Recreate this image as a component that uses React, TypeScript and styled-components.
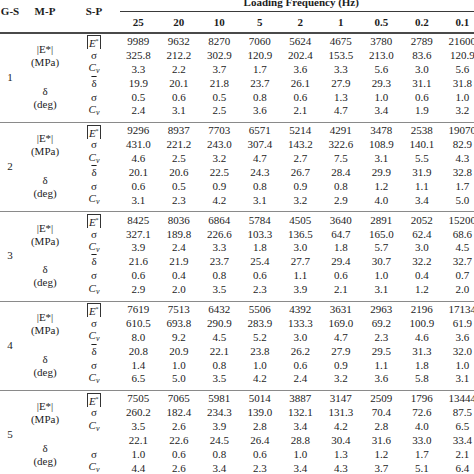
import React from 'react';
import styled, { createGlobalStyle } from 'styled-components';

const GlobalStyle = createGlobalStyle`
  html, body {
    margin: 0;
    padding: 0;
    background: #ffffff;
    overflow: hidden;
  }
`;

const COLUMNS = '20px 50px 48px repeat(9, 40.5px)';
const ROW_H = '13.9px';

const Page = styled.div`
  width: 474px;
  height: 474px;
  overflow: hidden;
  background: #ffffff;
  color: #1c1c1c;
  font-family: 'Liberation Serif', 'Times New Roman', serif;
  font-size: 11px;
`;

const Sheet = styled.div`
  width: 482.5px;
  margin-top: -7px;
`;

const Header = styled.div`
  display: grid;
  grid-template-columns: ${COLUMNS};
  grid-template-rows: 19px 20px;
  border-bottom: 2px solid #4a4a4a;
  font-weight: 700;
`;

const HeadLabel = styled.div`
  grid-row: 1 / 3;
  display: flex;
  align-items: center;
  justify-content: center;
  padding-bottom: 3px;
  white-space: nowrap;
`;

const SpanHead = styled.div`
  grid-column: 4 / 13;
  grid-row: 1;
  display: flex;
  align-items: center;
  justify-content: center;
  border-bottom: 1px solid #3a3a3a;
  margin-left: 2px;
  white-space: nowrap;
`;

const FreqHead = styled.div`
  grid-row: 2;
  display: flex;
  align-items: center;
  justify-content: center;
`;

const Group = styled.div<{ $first: boolean }>`
  display: grid;
  grid-template-columns: ${COLUMNS};
  grid-template-rows: repeat(6, ${ROW_H});
  padding: ${p => (p.$first ? '1px' : '1.5px')} 0 3.5px;
  border-top: ${p => (p.$first ? 'none' : '1.5px solid #8a8a8a')};
`;

const GroupNo = styled.div`
  grid-column: 1;
  grid-row: 1 / 7;
  display: flex;
  align-items: center;
  justify-content: center;
`;

const Property = styled.div<{ $row: string }>`
  grid-column: 2;
  grid-row: ${p => p.$row};
  display: flex;
  flex-direction: column;
  align-items: center;
  justify-content: center;
  line-height: 13px;
`;

const Symbol = styled.div`
  grid-column: 3;
  display: flex;
  align-items: center;
  justify-content: center;
  line-height: ${ROW_H};
`;

const Value = styled.div`
  display: flex;
  align-items: center;
  justify-content: center;
  line-height: ${ROW_H};
  white-space: nowrap;
`;

const ModBox = styled.span`
  display: inline-block;
  border: 1px solid #333;
  border-bottom: none;
  padding: 0 1.5px 0 1px;
  line-height: 11px;
  margin-top: 1px;
  font-style: italic;
`;

const Star = styled.sup`
  font-size: 6px;
  vertical-align: 4px;
  font-style: normal;
`;

const Bar = styled.span`
  text-decoration: overline;
`;

const Italic = styled.i``;

const Sub = styled.sub`
  font-size: 8px;
  font-style: italic;
  vertical-align: -2px;
`;

const freqs = ['25', '20', '10', '5', '2', '1', '0.5', '0.2', '0.1'];

const groups: string[][] = [
  [
    '9989 9632 8270 7060 5624 4675 3780 2789 21600',
    '325.8 212.2 302.9 120.9 202.4 153.5 213.0 83.6 120.9',
    '3.3 2.2 3.7 1.7 3.6 3.3 5.6 3.0 5.6',
    '19.9 20.1 21.8 23.7 26.1 27.9 29.3 31.1 31.8',
    '0.5 0.6 0.5 0.8 0.6 1.3 1.0 0.6 1.0',
    '2.4 3.1 2.5 3.6 2.1 4.7 3.4 1.9 3.2',
  ],
  [
    '9296 8937 7703 6571 5214 4291 3478 2538 19070',
    '431.0 221.2 243.0 307.4 143.2 322.6 108.9 140.1 82.9',
    '4.6 2.5 3.2 4.7 2.7 7.5 3.1 5.5 4.3',
    '20.1 20.6 22.5 24.3 26.7 28.4 29.9 31.9 32.8',
    '0.6 0.5 0.9 0.8 0.9 0.8 1.2 1.1 1.7',
    '3.1 2.3 4.2 3.1 3.2 2.9 4.0 3.4 5.0',
  ],
  [
    '8425 8036 6864 5784 4505 3640 2891 2052 15200',
    '327.1 189.8 226.6 103.3 136.5 64.7 165.0 62.4 68.6',
    '3.9 2.4 3.3 1.8 3.0 1.8 5.7 3.0 4.5',
    '21.6 21.9 23.7 25.4 27.7 29.4 30.7 32.2 32.7',
    '0.6 0.4 0.8 0.6 1.1 0.6 1.0 0.4 0.7',
    '2.9 2.0 3.5 2.3 3.9 2.1 3.1 1.2 2.0',
  ],
  [
    '7619 7513 6432 5506 4392 3631 2963 2196 17134',
    '610.5 693.8 290.9 283.9 133.3 169.0 69.2 100.9 61.9',
    '8.0 9.2 4.5 5.2 3.0 4.7 2.3 4.6 3.6',
    '20.8 20.9 22.1 23.8 26.2 27.9 29.5 31.3 32.0',
    '1.4 1.0 0.8 1.0 0.6 0.9 1.1 1.8 1.0',
    '6.5 5.0 3.5 4.2 2.4 3.2 3.6 5.8 3.1',
  ],
  [
    '7505 7065 5981 5014 3887 3147 2509 1796 13444',
    '260.2 182.4 234.3 139.0 132.1 131.3 70.4 72.6 87.5',
    '3.5 2.6 3.9 2.8 3.4 4.2 2.8 4.0 6.5',
    '22.1 22.6 24.5 26.4 28.8 30.4 31.6 33.0 33.4',
    '1.0 0.6 0.8 0.6 1.0 1.3 1.2 1.7 2.1',
    '4.4 2.6 3.4 2.3 3.4 4.3 3.7 5.1 6.4',
  ],
];

const Cv = () => (
  <span>
    <Italic>C</Italic>
    <Sub>v</Sub>
  </span>
);

// symbol for each of the six rows; group 5 has no mean-delta mark in the source
const symbolFor = (row: number, group: number) => {
  switch (row) {
    case 0:
      return (
        <ModBox>
          E<Star>*</Star>
        </ModBox>
      );
    case 1:
    case 4:
      return 'σ';
    case 3:
      return group === 4 ? '' : <Bar>δ</Bar>;
    default:
      return <Cv />;
  }
};

const App: React.FC = () => {
  return (
    <>
      <GlobalStyle />
      <Page>
        <Sheet>
          <Header>
            <HeadLabel>G-S</HeadLabel>
            <HeadLabel>M-P</HeadLabel>
            <HeadLabel>S-P</HeadLabel>
            <SpanHead>Loading Frequency (Hz)</SpanHead>
            {freqs.map(f => (
              <FreqHead key={f}>{f}</FreqHead>
            ))}
          </Header>

          {groups.map((rows, g) => (
            <Group key={g} $first={g === 0}>
              <GroupNo>{g + 1}</GroupNo>
              <Property $row="1 / 4">
                <span>|E*|</span>
                <span>(MPa)</span>
              </Property>
              <Property $row="4 / 7">
                <span>δ</span>
                <span>(deg)</span>
              </Property>
              {rows.map((line, r) => (
                <React.Fragment key={r}>
                  <Symbol style={{ gridRow: r + 1 }}>{symbolFor(r, g)}</Symbol>
                  {line.split(' ').map((v, c) => (
                    <Value key={c} style={{ gridRow: r + 1, gridColumn: c + 4 }}>
                      {v}
                    </Value>
                  ))}
                </React.Fragment>
              ))}
            </Group>
          ))}
        </Sheet>
      </Page>
    </>
  );
};

export default App;
